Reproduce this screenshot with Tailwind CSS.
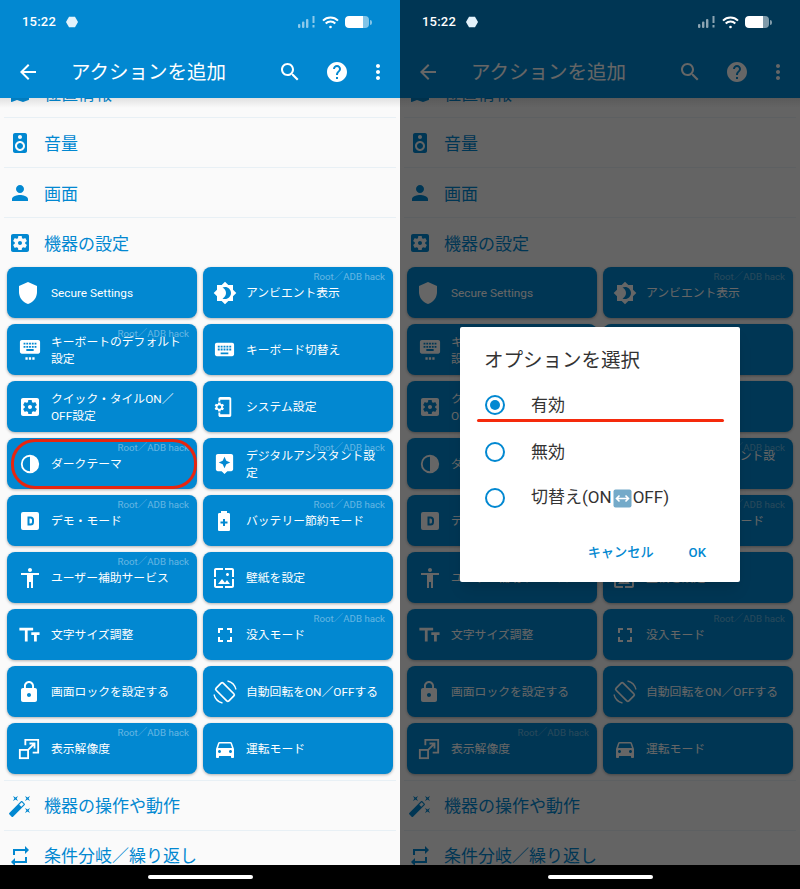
<!DOCTYPE html>
<html lang="ja">
<head>
    <meta charset="UTF-8">
    <title>アクションを追加</title>
    <script src="https://cdn.jsdelivr.net/npm/@tailwindcss/browser@4"></script>
</head>
<body class="bg-black">
<div class="relative flex w-[800px] h-[889px] overflow-hidden font-['Roboto','Noto_Sans_CJK_JP',sans-serif]">

    <!-- Left phone -->
    <div id="phone" class="w-[400px] h-[889px] flex flex-col bg-black">
        <div class="bg-[#0288d1]">
            <div class="relative z-20 h-[45px] flex items-center pl-[22px] pr-[28px] pb-[1px] text-white">
                <span class="text-[13px] font-medium tracking-[0.2px]">15:22</span>
                <svg class="w-[12px] h-[12px] ml-[10px]" viewBox="0 0 12 12" fill="#e3f2fb"><path d="M3 .8h6L12 6 9 11.2H3L0 6z"/></svg>
                <svg class="w-[18px] h-[12px] ml-auto" viewBox="0 0 18 12" fill="#fff" opacity=".55"><rect x="0" y="8" width="2.4" height="4" rx="1"/><rect x="4" y="5.5" width="2.4" height="6.5" rx="1"/><rect x="8" y="3" width="2.4" height="9" rx="1"/><rect x="14.5" y="0" width="2" height="7"/><rect x="14.5" y="9" width="2" height="2.5"/></svg>
                <svg class="w-[17px] h-[13px] ml-[6px]" viewBox="0 0 17 13" fill="none" stroke="#fff" stroke-width="2"><path d="M1 4.6a10.6 10.6 0 0 1 15 0"/><path d="M3.7 7.5a6.8 6.8 0 0 1 9.6 0"/><circle cx="8.5" cy="11" r="1.3" fill="#fff" stroke="none"/></svg>
                <div class="flex items-center ml-[6px]">
                    <div class="w-[24px] h-[12px] rounded-[4px] bg-white/50 overflow-hidden"><div class="w-[18px] h-[12px] bg-white rounded-l-[4px]"></div></div>
                    <div class="w-[2px] h-[5px] ml-[1px] bg-white/50 rounded-r-sm"></div>
                </div>
            </div>
            <header class="h-[53px] flex items-center text-white">
                <svg class="w-[24px] h-[24px] ml-[16px]" viewBox="0 0 24 24" fill="currentColor"><path d="M20 11H7.83l5.59-5.59L12 4l-8 8 8 8 1.41-1.41L7.83 13H20v-2z"/></svg>
                <h1 class="ml-[31px] pt-[2px] text-[19.5px] leading-none">アクションを追加</h1>
                <svg class="w-[24px] h-[24px] ml-auto" viewBox="0 0 24 24" fill="currentColor"><path d="M15.5 14h-.79l-.28-.27C15.41 12.59 16 11.11 16 9.5 16 5.91 13.09 3 9.5 3S3 5.91 3 9.5 5.91 16 9.5 16c1.61 0 3.09-.59 4.23-1.57l.27.28v.79l5 4.99L20.49 19l-4.99-5zm-6 0C7.01 14 5 11.99 5 9.5S7.01 5 9.5 5 14 7.01 14 9.5 11.99 14 9.5 14z"/></svg>
                <svg class="w-[24px] h-[24px] ml-[23px]" viewBox="0 0 24 24" fill="currentColor"><path d="M12 2C6.48 2 2 6.48 2 12s4.48 10 10 10 10-4.48 10-10S17.52 2 12 2zm1 17h-2v-2h2v2zm2.07-7.75l-.9.92C13.45 12.9 13 13.5 13 15h-2v-.5c0-1.1.45-2.1 1.17-2.83l1.24-1.26c.37-.36.59-.86.59-1.41 0-1.1-.9-2-2-2s-2 .9-2 2H8c0-2.21 1.79-4 4-4s4 1.79 4 4c0 .88-.36 1.68-.93 2.25z"/></svg>
                <svg class="w-[24px] h-[24px] ml-[17px] mr-[10px]" viewBox="0 0 24 24" fill="currentColor"><path d="M12 8c1.1 0 2-.9 2-2s-.9-2-2-2-2 .9-2 2 .9 2 2 2zm0 2c-1.1 0-2 .9-2 2s.9 2 2 2 2-.9 2-2-.9-2-2-2zm0 6c-1.1 0-2 .9-2 2s.9 2 2 2 2-.9 2-2-.9-2-2-2z"/></svg>
            </header>
        </div>

        <main class="relative h-[767px] overflow-hidden bg-[#fafafa] text-[#0288d1]">
            <div class="absolute top-0 inset-x-0 h-[10px] bg-gradient-to-b from-black/10 to-transparent"></div>

            <div class="-mt-[30px] h-[50px] mx-[4px] flex items-center border-b border-[#e8f0f5]">
                <svg class="w-[24px] h-[24px] ml-[4px] shrink-0" viewBox="0 0 24 24" fill="currentColor"><path d="M20.5 3l-.16.03L15 5.1 9 3 3.36 4.9c-.21.07-.36.25-.36.48V20.5c0 .28.22.5.5.5l.16-.03L9 18.9l6 2.1 5.64-1.9c.21-.07.36-.25.36-.48V3.5c0-.28-.22-.5-.5-.5z"/></svg>
                <span class="ml-[12px] pt-[4px] text-[17px]">位置情報</span>
            </div>
            <div class="h-[50px] mx-[4px] flex items-center border-b border-[#e8f0f5]">
                <svg class="w-[24px] h-[24px] ml-[4px] shrink-0" viewBox="0 0 24 24" fill="currentColor"><path d="M17 2H7c-1.1 0-2 .9-2 2v16c0 1.1.9 1.99 2 1.99L17 22c1.1 0 2-.9 2-2V4c0-1.1-.9-2-2-2zm-5 2c1.1 0 2 .9 2 2s-.9 2-2 2c-1.11 0-2-.9-2-2s.89-2 2-2zm0 16c-2.76 0-5-2.24-5-5s2.24-5 5-5 5 2.24 5 5-2.24 5-5 5zm0-8c-1.66 0-3 1.34-3 3s1.34 3 3 3 3-1.34 3-3-1.34-3-3-3z"/></svg>
                <span class="ml-[12px] pt-[4px] text-[17px]">音量</span>
            </div>
            <div class="h-[50px] mx-[4px] flex items-center border-b border-[#e8f0f5]">
                <svg class="w-[24px] h-[24px] ml-[4px] shrink-0" viewBox="0 0 24 24" fill="currentColor"><path d="M12 12c2.21 0 4-1.79 4-4s-1.79-4-4-4-4 1.79-4 4 1.79 4 4 4zm0 2c-2.67 0-8 1.34-8 4v2h16v-2c0-2.66-5.33-4-8-4z"/></svg>
                <span class="ml-[12px] pt-[4px] text-[17px]">画面</span>
            </div>
            <div class="h-[49px] mx-[4px] flex items-center">
                <svg class="w-[24px] h-[24px] ml-[4px] shrink-0" viewBox="0 0 24 24" fill="currentColor"><path d="M12 10c-1.1 0-2 .9-2 2s.9 2 2 2 2-.9 2-2-.9-2-2-2zm7-7H5c-1.11 0-2 .9-2 2v14c0 1.1.89 2 2 2h14c1.11 0 2-.9 2-2V5c0-1.1-.89-2-2-2zm-1.75 9c0 .23-.02.46-.05.68l1.48 1.16c.13.11.17.3.08.45l-1.4 2.42c-.09.15-.27.21-.43.15l-1.74-.7c-.36.28-.76.51-1.18.69l-.26 1.85c-.03.17-.18.3-.35.3h-2.8c-.17 0-.32-.13-.35-.29l-.26-1.85c-.43-.18-.82-.41-1.18-.69l-1.74.7c-.16.06-.34 0-.43-.15l-1.4-2.42c-.09-.15-.05-.34.08-.45l1.48-1.16c-.03-.23-.05-.46-.05-.69 0-.23.02-.46.05-.68l-1.48-1.16c-.13-.11-.17-.3-.08-.45l1.4-2.42c.09-.15.27-.21.43-.15l1.74.7c.36-.28.76-.51 1.18-.69l.26-1.85c.03-.17.18-.3.35-.3h2.8c.17 0 .32.13.35.29l.26 1.85c.43.18.82.41 1.18.69l1.74-.7c.16-.06.34 0 .43.15l1.4 2.42c.09.15.05.34-.08.45l-1.48 1.16c.03.23.05.46.05.69z"/></svg>
                <span class="ml-[12px] pt-[4px] text-[17px]">機器の設定</span>
            </div>

            <!-- Action tiles -->
            <div class="grid grid-cols-2 gap-[6px] px-[7px] pb-[6px] text-white text-[11.8px] leading-[17px]">
                <div class="relative h-[51px] rounded-[8px] bg-[#0288d1] shadow-[0_1px_3px_rgba(0,0,0,.3)] flex items-center pl-[12px] pr-[12px]">
                    <svg class="w-[24px] h-[24px] shrink-0 -ml-[3px]" viewBox="0 0 24 24" fill="#fff"><path d="M12 1L3 5v6c0 5.55 3.84 10.74 9 12 5.16-1.26 9-6.45 9-12V5l-9-4z"/></svg>
                    <span class="ml-[11px] pt-[2px]">Secure Settings</span>
                </div>
                <div class="relative h-[51px] rounded-[8px] bg-[#0288d1] shadow-[0_1px_3px_rgba(0,0,0,.3)] flex items-center pl-[12px] pr-[12px]">
                    <span class="absolute top-[4px] right-[8px] text-[9.7px] leading-[12px] text-white/40">Root／ADB hack</span>
                    <svg class="w-[24px] h-[24px] shrink-0 -ml-[2px]" viewBox="0 0 24 24" fill="#fff"><path d="M20 8.69V4h-4.69L12 .69 8.69 4H4v4.69L.69 12 4 15.31V20h4.69L12 23.31 15.31 20H20v-4.69L23.31 12 20 8.69zM12 18c-.89 0-1.74-.2-2.5-.55C11.56 16.5 13 14.42 13 12s-1.44-4.5-3.5-5.45C10.26 6.2 11.11 6 12 6c3.31 0 6 2.69 6 6s-2.69 6-6 6z"/></svg>
                    <span class="ml-[9px] pt-[2px]">アンビエント表示</span>
                </div>
                <div class="relative h-[51px] rounded-[8px] bg-[#0288d1] shadow-[0_1px_3px_rgba(0,0,0,.3)] flex items-center pl-[12px] pr-[12px]">
                    <span class="absolute top-[4px] right-[8px] text-[9.7px] leading-[12px] text-white/40">Root／ADB hack</span>
                    <svg class="w-[22px] h-[22px] shrink-0" viewBox="0 0 24 24" fill="#fff"><path fill-rule="evenodd" d="M21 1H3C2 1 1 2 1 3v11c0 1 1 2 2 2h18c1 0 2-1 2-2V3c0-1-1-2-2-2zM11 4h2v2h-2zm0 3.5h2v2h-2zM8 4h2v2H8zm0 3.5h2v2H8zm-1 2H5v-2h2zM7 6H5V4h2zm9 7H8v-2h8zm0-3.5h-2v-2h2zM16 6h-2V4h2zm3 3.5h-2v-2h2zM19 6h-2V4h2z"/><path d="M7 20h2.5v2.5H7zm3.75 0h2.5v2.5h-2.5zm3.75 0H17v2.5h-2.5z"/></svg>
                    <span class="ml-[10px] pt-[2px]">キーボートのデフォルト設定</span>
                </div>
                <div class="relative h-[51px] rounded-[8px] bg-[#0288d1] shadow-[0_1px_3px_rgba(0,0,0,.3)] flex items-center pl-[12px] pr-[12px]">
                    <svg class="w-[23px] h-[23px] shrink-0 -ml-[2px]" viewBox="0 0 24 24" fill="#fff"><path d="M20 5H4c-1.1 0-1.99.9-1.99 2L2 17c0 1.1.9 2 2 2h16c1.1 0 2-.9 2-2V7c0-1.1-.9-2-2-2zm-9 3h2v2h-2V8zm0 3h2v2h-2v-2zM8 8h2v2H8V8zm0 3h2v2H8v-2zm-1 2H5v-2h2v2zm0-3H5V8h2v2zm9 7H8v-2h8v2zm0-4h-2v-2h2v2zm0-3h-2V8h2v2zm3 3h-2v-2h2v2zm0-3h-2V8h2v2z"/></svg>
                    <span class="ml-[10px] pt-[2px]">キーボード切替え</span>
                </div>
                <div class="relative h-[51px] rounded-[8px] bg-[#0288d1] shadow-[0_1px_3px_rgba(0,0,0,.3)] flex items-center pl-[12px] pr-[12px]">
                    <svg class="w-[24px] h-[24px] shrink-0 -ml-[1px]" viewBox="0 0 24 24" fill="#fff"><path d="M12 10c-1.1 0-2 .9-2 2s.9 2 2 2 2-.9 2-2-.9-2-2-2zm7-7H5c-1.11 0-2 .9-2 2v14c0 1.1.89 2 2 2h14c1.11 0 2-.9 2-2V5c0-1.1-.89-2-2-2zm-1.75 9c0 .23-.02.46-.05.68l1.48 1.16c.13.11.17.3.08.45l-1.4 2.42c-.09.15-.27.21-.43.15l-1.74-.7c-.36.28-.76.51-1.18.69l-.26 1.85c-.03.17-.18.3-.35.3h-2.8c-.17 0-.32-.13-.35-.29l-.26-1.85c-.43-.18-.82-.41-1.18-.69l-1.74.7c-.16.06-.34 0-.43-.15l-1.4-2.42c-.09-.15-.05-.34.08-.45l1.48-1.16c-.03-.23-.05-.46-.05-.69 0-.23.02-.46.05-.68l-1.48-1.16c-.13-.11-.17-.3-.08-.45l1.4-2.42c.09-.15.27-.21.43-.15l1.74.7c.36-.28.76-.51 1.18-.69l.26-1.85c.03-.17.18-.3.35-.3h2.8c.17 0 .32.13.35.29l.26 1.85c.43.18.82.41 1.18.69l1.74-.7c.16-.06.34 0 .43.15l1.4 2.42c.09.15.05.34-.08.45l-1.48 1.16c.03.23.05.46.05.69z"/></svg>
                    <span class="ml-[9px] pt-[2px]">クイック・タイルON／OFF設定</span>
                </div>
                <div class="relative h-[51px] rounded-[8px] bg-[#0288d1] shadow-[0_1px_3px_rgba(0,0,0,.3)] flex items-center pl-[12px] pr-[12px]">
                    <svg class="w-[22px] h-[22px] shrink-0 -ml-[3px]" viewBox="0 0 24 24" fill="#fff"><path d="M11.8 12.5v-1l1.1-.8c.1-.1.1-.2.1-.3l-1-1.7c-.1-.1-.2-.2-.3-.1l-1.3.4c-.3-.2-.6-.4-.9-.5l-.2-1.3c0-.1-.1-.2-.3-.2H7c-.1 0-.2.1-.3.2l-.2 1.3c-.3.1-.6.3-.9.5l-1.3-.5c-.1 0-.2 0-.3.1l-1 1.7c-.1.1 0 .2.1.3l1.1.8v1l-1.1.8c-.1.2-.1.3-.1.4l1 1.7c.1.1.2.2.3.1l1.4-.4c.3.2.6.4.9.5l.2 1.3c-.1.1.1.2.2.2h2c.1 0 .2-.1.3-.2l.2-1.3c.3-.1.6-.3.9-.5l1.3.5c.1 0 .2 0 .3-.1l1-1.7c.1-.1 0-.2-.1-.3l-1.1-.9zM8 14c-1.1 0-2-.9-2-2s.9-2 2-2 2 .9 2 2-.9 2-2 2zM19 1H9c-1.1 0-2 .9-2 2v3h2V4h10v16H9v-2H7v3c0 1.1.9 2 2 2h10c1.1 0 2-.9 2-2V3c0-1.1-.9-2-2-2z"/></svg>
                    <span class="ml-[12px] pt-[2px]">システム設定</span>
                </div>
                <div class="relative h-[51px] rounded-[8px] bg-[#0288d1] shadow-[0_1px_3px_rgba(0,0,0,.3)] flex items-center pl-[12px] pr-[12px]">
                    <span class="absolute top-[4px] right-[8px] text-[9.7px] leading-[12px] text-white/40">Root／ADB hack</span>
                    <svg class="w-[22px] h-[22px] shrink-0" viewBox="0 0 24 24" fill="#fff"><path fill-rule="evenodd" d="M12 2a10 10 0 1 0 0 20a10 10 0 0 0 0-20zm0 18a8 8 0 0 1 0-16z"/></svg>
                    <span class="ml-[10px] pt-[2px]">ダークテーマ</span>
                </div>
                <div class="relative h-[51px] rounded-[8px] bg-[#0288d1] shadow-[0_1px_3px_rgba(0,0,0,.3)] flex items-center pl-[12px] pr-[12px]">
                    <span class="absolute top-[4px] right-[8px] text-[9.7px] leading-[12px] text-white/40">Root／ADB hack</span>
                    <svg class="w-[23px] h-[23px] shrink-0 -ml-[2px]" viewBox="0 0 24 24" fill="#fff"><path d="M19 2H5c-1.1 0-2 .9-2 2v14c0 1.1.9 2 2 2h4l3 3 3-3h4c1.1 0 2-.9 2-2V4c0-1.1-.9-2-2-2zm-5.12 10.88L12 17l-1.88-4.12L6 11l4.12-1.88L12 5l1.88 4.12L18 11l-4.12 1.88z"/></svg>
                    <span class="ml-[10px] pt-[2px]">デジタルアシスタント設定</span>
                </div>
                <div class="relative h-[51px] rounded-[8px] bg-[#0288d1] shadow-[0_1px_3px_rgba(0,0,0,.3)] flex items-center pl-[12px] pr-[12px]">
                    <span class="absolute top-[4px] right-[8px] text-[9.7px] leading-[12px] text-white/40">Root／ADB hack</span>
                    <svg class="w-[24px] h-[24px] shrink-0 -ml-[1px]" viewBox="0 0 24 24" fill="#fff"><path fill-rule="evenodd" d="M5 3h14a2 2 0 0 1 2 2v14a2 2 0 0 1-2 2H5a2 2 0 0 1-2-2V5a2 2 0 0 1 2-2zm4.500 4.500v9h3a3.500 3.500 0 0 0 3.500-3.500v-2a3.500 3.500 0 0 0-3.500-3.500zm2 2h1a1.500 1.500 0 0 1 1.500 1.500v2a1.500 1.500 0 0 1-1.500 1.500h-1z"/></svg>
                    <span class="ml-[9px] pt-[2px]">デモ・モード</span>
                </div>
                <div class="relative h-[51px] rounded-[8px] bg-[#0288d1] shadow-[0_1px_3px_rgba(0,0,0,.3)] flex items-center pl-[12px] pr-[12px]">
                    <span class="absolute top-[4px] right-[8px] text-[9.7px] leading-[12px] text-white/40">Root／ADB hack</span>
                    <svg class="w-[24px] h-[24px] shrink-0 -ml-[3px]" viewBox="0 0 24 24" fill="#fff"><path fill-rule="evenodd" d="M9 2h6v2h1.67C17.4 4 18 4.6 18 5.33v15.34C18 21.4 17.4 22 16.67 22H7.33C6.6 22 6 21.4 6 20.67V5.33C6 4.6 6.6 4 7.33 4H9zm2 8v2.500H8.500v2H11V17h2v-2.500h2.500v-2H13V10z"/></svg>
                    <span class="ml-[10px] pt-[2px]">バッテリー節約モード</span>
                </div>
                <div class="relative h-[51px] rounded-[8px] bg-[#0288d1] shadow-[0_1px_3px_rgba(0,0,0,.3)] flex items-center pl-[12px] pr-[12px]">
                    <span class="absolute top-[4px] right-[8px] text-[9.7px] leading-[12px] text-white/40">Root／ADB hack</span>
                    <svg class="w-[24px] h-[24px] shrink-0 -ml-[1px]" viewBox="0 0 24 24" fill="#fff"><path d="M12 2c1.1 0 2 .9 2 2s-.9 2-2 2-2-.9-2-2 .9-2 2-2zm9 7h-6v13h-2v-6h-2v6H9V9H3V7h18v2z"/></svg>
                    <span class="ml-[9px] pt-[2px]">ユーザー補助サービス</span>
                </div>
                <div class="relative h-[51px] rounded-[8px] bg-[#0288d1] shadow-[0_1px_3px_rgba(0,0,0,.3)] flex items-center pl-[12px] pr-[12px]">
                    <svg class="w-[24px] h-[24px] shrink-0 -ml-[3px]" viewBox="0 0 24 24" fill="#fff"><path d="M4 4h7V2H4c-1.1 0-2 .9-2 2v7h2V4zm6 9l-4 5h12l-3-4-2.030 2.710L10 13zm7-4.500c0-.83-.67-1.500-1.500-1.500S14 7.670 14 8.500s.67 1.500 1.500 1.500S17 9.330 17 8.500zM20 2h-7v2h7v7h2V4c0-1.1-.9-2-2-2zm0 18h-7v2h7c1.1 0 2-.9 2-2v-7h-2v7zM4 13H2v7c0 1.1.9 2 2 2h7v-2H4v-7z"/></svg>
                    <span class="ml-[10px] pt-[2px]">壁紙を設定</span>
                </div>
                <div class="relative h-[51px] rounded-[8px] bg-[#0288d1] shadow-[0_1px_3px_rgba(0,0,0,.3)] flex items-center pl-[12px] pr-[12px]">
                    <svg class="w-[22px] h-[22px] shrink-0 -ml-[1px]" viewBox="0 0 24 24" fill="#fff"><path d="M1.500 4v3h6v12h3V7h6V4zm22 5h-9v3h3v7h3v-7h3z"/></svg>
                    <span class="ml-[11px] pt-[2px]">文字サイズ調整</span>
                </div>
                <div class="relative h-[51px] rounded-[8px] bg-[#0288d1] shadow-[0_1px_3px_rgba(0,0,0,.3)] flex items-center pl-[12px] pr-[12px]">
                    <span class="absolute top-[4px] right-[8px] text-[9.7px] leading-[12px] text-white/40">Root／ADB hack</span>
                    <svg class="w-[24px] h-[24px] shrink-0 -ml-[2px]" viewBox="0 0 24 24" fill="#fff"><path d="M7 14H5v5h5v-2H7v-3zm-2-4h2V7h3V5H5v5zm12 7h-3v2h5v-5h-2v3zM14 5v2h3v3h2V5h-5z"/></svg>
                    <span class="ml-[9px] pt-[2px]">没入モード</span>
                </div>
                <div class="relative h-[51px] rounded-[8px] bg-[#0288d1] shadow-[0_1px_3px_rgba(0,0,0,.3)] flex items-center pl-[12px] pr-[12px]">
                    <svg class="w-[24px] h-[24px] shrink-0 -ml-[2px]" viewBox="0 0 24 24" fill="#fff"><path d="M18 8h-1V6c0-2.760-2.240-5-5-5S7 3.240 7 6v2H6c-1.1 0-2 .9-2 2v10c0 1.1.9 2 2 2h12c1.1 0 2-.9 2-2V10c0-1.1-.9-2-2-2zm-6 9c-1.1 0-2-.9-2-2s.9-2 2-2 2 .9 2 2-.9 2-2 2zm3.100-9H8.900V6c0-1.710 1.390-3.100 3.100-3.100 1.710 0 3.100 1.390 3.100 3.100v2z"/></svg>
                    <span class="ml-[10px] pt-[2px]">画面ロックを設定する</span>
                </div>
                <div class="relative h-[51px] rounded-[8px] bg-[#0288d1] shadow-[0_1px_3px_rgba(0,0,0,.3)] flex items-center pl-[12px] pr-[12px]">
                    <svg class="w-[24px] h-[24px] shrink-0 -ml-[2px]" viewBox="0 0 24 24" fill="none" stroke="#fff"><rect x="7" y="3" width="10" height="18" rx="1.500" stroke-width="1.700" transform="rotate(-45 12 12)"/><path stroke-width="1.300" d="M14.500 1A11.500 11.500 0 0 1 23 9.500M9.500 23A11.500 11.500 0 0 1 1 14.500"/></svg>
                    <span class="ml-[9px] pt-[2px]">自動回転をON／OFFする</span>
                </div>
                <div class="relative h-[51px] rounded-[8px] bg-[#0288d1] shadow-[0_1px_3px_rgba(0,0,0,.3)] flex items-center pl-[12px] pr-[12px]">
                    <span class="absolute top-[4px] right-[8px] text-[9.7px] leading-[12px] text-white/40">Root／ADB hack</span>
                    <svg class="w-[22px] h-[22px] shrink-0 -ml-[1px]" viewBox="0 0 24 24" fill="none" stroke="#fff" stroke-width="2"><path d="M8 8V2h14v14h-6"/><rect x="2" y="13" width="9" height="9"/><path d="M11 13l7-7M12.500 6H18v5.500"/></svg>
                    <span class="ml-[11px] pt-[2px]">表示解像度</span>
                </div>
                <div class="relative h-[51px] rounded-[8px] bg-[#0288d1] shadow-[0_1px_3px_rgba(0,0,0,.3)] flex items-center pl-[12px] pr-[12px]">
                    <svg class="w-[24px] h-[24px] shrink-0 -ml-[2px]" viewBox="0 0 24 24" fill="#fff"><path d="M18.92 6.01C18.72 5.42 18.16 5 17.5 5h-11c-.66 0-1.21.42-1.42 1.01L3 12v8c0 .55.45 1 1 1h1c.55 0 1-.45 1-1v-1h12v1c0 .55.45 1 1 1h1c.55 0 1-.45 1-1v-8l-2.08-5.99zM6.500 16c-.83 0-1.500-.67-1.500-1.500S5.670 13 6.500 13s1.500.67 1.500 1.500S7.330 16 6.500 16zm11 0c-.83 0-1.500-.67-1.500-1.500s.67-1.500 1.500-1.500 1.500.67 1.500 1.500-.67 1.500-1.500 1.500zM5 11l1.500-4.500h11L19 11H5z"/></svg>
                    <span class="ml-[9px] pt-[2px]">運転モード</span>
                </div>
            </div>

            <div class="h-[50px] mx-[4px] flex items-center border-t border-[#e8f0f5]">
                <svg class="w-[24px] h-[24px] ml-[4px] shrink-0" viewBox="0 0 24 24" fill="currentColor"><path d="M7.500 5.600L10 7 8.600 4.500 10 2 7.500 3.400 5 2l1.400 2.500L5 7zm12 9.800L17 14l1.400 2.500L17 19l2.500-1.400L22 19l-1.400-2.500L22 14zM22 2l-2.500 1.400L17 2l1.400 2.500L17 7l2.500-1.400L22 7l-1.400-2.500zm-7.630 5.290c-.39-.39-1.020-.39-1.410 0L1.290 18.960c-.39.39-.39 1.020 0 1.410l2.340 2.340c.39.39 1.020.39 1.410 0L16.700 11.050c.39-.39.39-1.020 0-1.410l-2.330-2.350zm-1.030 5.490l-2.120-2.120 2.440-2.440 2.120 2.120-2.440 2.440z"/></svg>
                <span class="ml-[12px] pt-[2px] text-[17px]">機器の操作や動作</span>
            </div>
            <div class="h-[50px] mx-[4px] flex items-center border-t border-[#e8f0f5]">
                <svg class="w-[24px] h-[24px] ml-[4px] shrink-0" viewBox="0 0 24 24" fill="currentColor"><path d="M7 7h10v3l4-4-4-4v3H5v6h2V7zm10 10H7v-3l-4 4 4 4v-3h12v-6h-2v4z"/></svg>
                <span class="ml-[12px] pt-[2px] text-[17px]">条件分岐／繰り返し</span>
            </div>
        </main>

        <footer class="flex-1 flex items-center justify-center pb-[1px]">
            <div class="w-[105px] h-[4px] rounded-full bg-white"></div>
        </footer>
    </div>

    <!-- Right phone: same screen, dimmed, with the dialog on top -->
    <div class="relative w-[400px] h-[889px]">
        <div id="phone-copy" class="h-full flex flex-col"></div>
        <div class="absolute inset-x-0 top-0 h-[865px] z-10 bg-black/60"></div>
        <div class="absolute z-20 left-[60px] top-[327px] w-[280px] h-[255px] bg-white rounded-[2px] shadow-lg pt-[20px] text-[#333]">
            <h2 class="pl-[24px] text-[19.5px] leading-[28px]">オプションを選択</h2>
            <div class="mt-[7px] h-[46px] flex items-center pl-[25px] text-[17px]">
                <span class="w-[20px] h-[20px] rounded-full border-2 border-[#0288d1] flex items-center justify-center"><span class="w-[10px] h-[10px] rounded-full bg-[#0288d1]"></span></span>
                <span class="ml-[26px] pt-[2px]">有効</span>
            </div>
            <div class="h-[47px] flex items-center pl-[25px] text-[17px]">
                <span class="w-[20px] h-[20px] rounded-full border-2 border-[#0288d1]"></span>
                <span class="ml-[26px] pt-[2px]">無効</span>
            </div>
            <div class="h-[46px] flex items-center pl-[25px] text-[17px]">
                <span class="w-[20px] h-[20px] rounded-full border-2 border-[#0288d1]"></span>
                <span class="ml-[26px] flex items-center">切替え(ON<svg class="w-[19px] h-[19px] mx-[1px]" viewBox="0 0 19 19"><rect x=".5" y=".5" width="18" height="18" rx="2" fill="#74aac9"/><path d="M3.500 9.500h12M6.500 6.500l-3 3 3 3M12.500 6.500l3 3-3 3" fill="none" stroke="#fff" stroke-width="1.600"/></svg>OFF)</span>
            </div>
            <div class="mt-[22px] flex justify-end items-center pr-[34px] text-[13.2px] font-medium text-[#0288d1]">
                <span>キャンセル</span>
                <span class="ml-[35px]">OK</span>
            </div>
        </div>
        <div class="absolute z-30 left-[77px] top-[419px] w-[247px] h-[3px] rounded-full bg-[#f52a0c]"></div>
    </div>

    <!-- Red mark on the dark theme tile -->
    <div class="absolute z-30 left-[11px] top-[439px] w-[186px] h-[50px] rounded-[24px] border-[3px] border-[#e8250f]"></div>
</div>
<script>
    document.getElementById('phone-copy').innerHTML = document.getElementById('phone').innerHTML;
</script>
</body>
</html>
